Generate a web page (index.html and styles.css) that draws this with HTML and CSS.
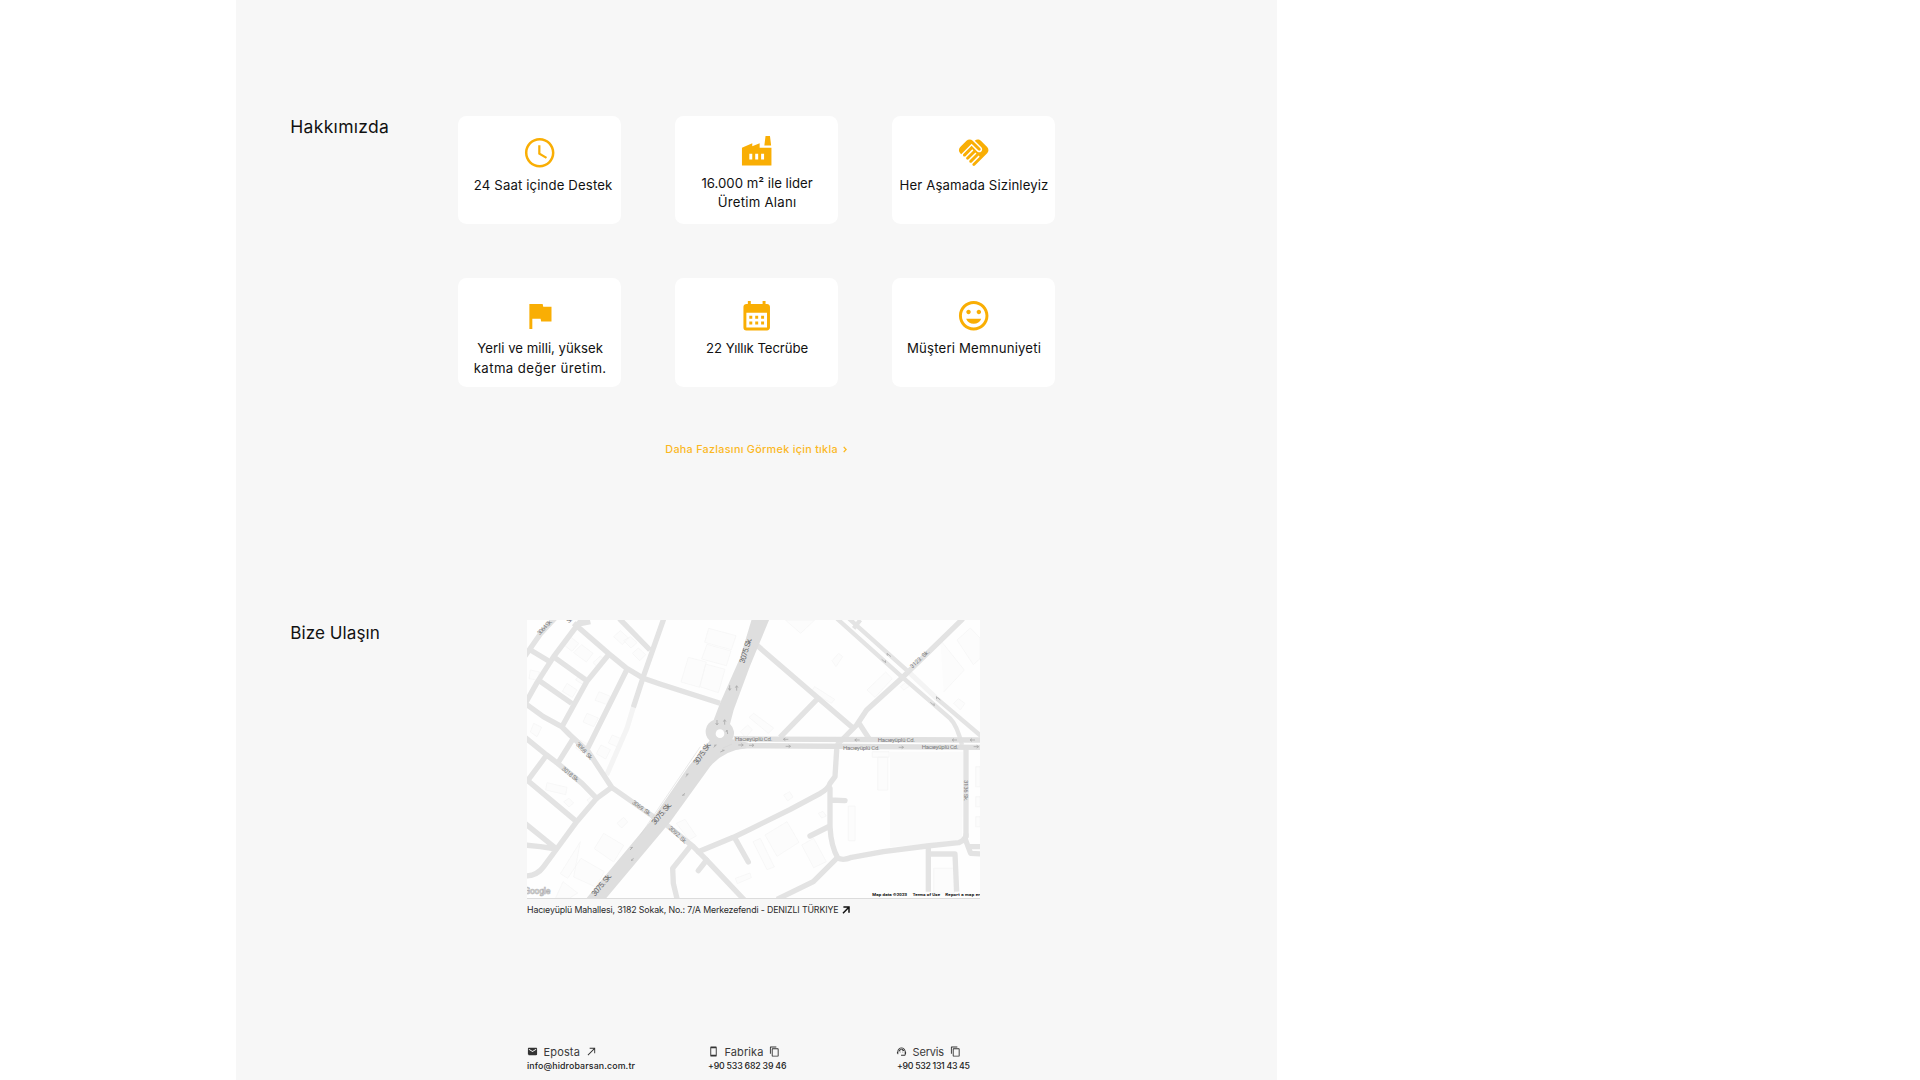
FILE: index.html
```html
<!DOCTYPE html>
<html lang="tr">
<head>
<meta charset="utf-8">
<title>Hidrobarsan</title>
<link rel="stylesheet" href="styles.css">
</head>
<body>
<main class="panel">
  <section class="about">
    <h2 class="title title-about">Hakkımızda</h2>
    <div class="cards">
      <article class="card">
        <svg class="icon" viewBox="0 0 24 24"><path d="M11.99 2C6.47 2 2 6.48 2 12s4.47 10 9.99 10C17.52 22 22 17.52 22 12S17.52 2 11.99 2zM12 20.300c-4.590 0-8.300-3.710-8.300-8.300s3.710-8.300 8.300-8.300 8.300 3.710 8.300 8.300-3.710 8.300-8.300 8.300zM12.500 7H11v6l5.250 3.150.75-1.230-4.500-2.670z"/></svg>
        <p class="label fit-a">24 Saat içinde Destek</p>
      </article>
      <article class="card card-raised">
        <svg class="icon" viewBox="0 0 24 24"><path d="M22 22H2V10l7-3v2l5-2v3h8v12zM17.200 8.500 18 2h3l.8 6.500h-4.600zM11 18h2v-4h-2v4zm-4 0h2v-4H7v4zm10-4h-2v4h2v-4z"/></svg>
        <p class="label">16.000 m² ile lider<br><span class="fit-b">Üretim Alanı</span></p>
      </article>
      <article class="card">
        <svg class="icon" viewBox="0 0 24 24"><path d="M16.480 10.410c-.39.39-1.040.39-1.430 0l-4.470-4.460-7.050 7.040-.66-.63c-1.170-1.170-1.170-3.070 0-4.240l4.240-4.240c1.170-1.170 3.070-1.170 4.240 0l5.130 5.120c.39.38.39 1.030 0 1.410zm.7-2.120c.78.78.78 2.050 0 2.830-1.270 1.270-2.610.22-2.830 0l-3.760-3.760-5.570 5.570c-.39.39-.39 1.020 0 1.410s1.020.39 1.420 0l4.620-4.620.71.71-4.620 4.620c-.39.39-.39 1.020 0 1.410s1.020.39 1.420 0l4.620-4.620.71.71-4.620 4.620c-.39.39-.39 1.020 0 1.410.39.39 1.020.39 1.410 0l4.620-4.620.71.71-4.620 4.620c-.39.39-.39 1.020 0 1.410s1.020.39 1.410 0l8.320-8.340c1.170-1.170 1.170-3.070 0-4.240l-4.240-4.240c-1.150-1.150-3.010-1.170-4.180-.06l4.470 4.470z"/></svg>
        <p class="label fit-f">Her Aşamada Sizinleyiz</p>
      </article>
      <article class="card card-low">
        <svg class="icon" viewBox="0 0 24 24"><path d="M14.400 6 14 4H5v17h2v-7h5.600l.4 2h7V6z"/></svg>
        <p class="label">Yerli ve milli, yüksek<br><span class="fit-c">katma değer üretim.</span></p>
      </article>
      <article class="card card-low">
        <svg class="icon" viewBox="0 0 24 24"><path d="M19 4h-1V2h-2v2H8V2H6v2H5c-1.110 0-1.990.9-1.990 2L3 20a2 2 0 0 0 2 2h14c1.100 0 2-.9 2-2V6c0-1.100-.9-2-2-2zm0 16H5V10h14v10zM9 14H7v-2h2v2zm4 0h-2v-2h2v2zm4 0h-2v-2h2v2zm-8 4H7v-2h2v2zm4 0h-2v-2h2v2zm4 0h-2v-2h2v2z"/></svg>
        <p class="label fit-d">22 Yıllık Tecrübe</p>
      </article>
      <article class="card card-low">
        <svg class="icon" viewBox="0 0 24 24"><path d="M11.990 2C6.470 2 2 6.480 2 12s4.470 10 9.990 10C17.520 22 22 17.520 22 12S17.520 2 11.990 2zM12 20c-4.420 0-8-3.580-8-8s3.580-8 8-8 8 3.580 8 8-3.580 8-8 8zm3.500-9c.83 0 1.500-.67 1.500-1.500S16.330 8 15.500 8 14 8.670 14 9.500s.67 1.500 1.500 1.500zm-7 0c.83 0 1.500-.67 1.500-1.500S9.330 8 8.500 8 7 8.670 7 9.500 7.670 11 8.500 11zm3.500 6.500c2.330 0 4.310-1.160 5.110-3.500H6.890c.8 2.340 2.780 3.500 5.110 3.500z"/></svg>
        <p class="label fit-e">Müşteri Memnuniyeti</p>
      </article>
    </div>
  </section>

  <a class="more"><span>Daha Fazlasını Görmek için tıkla</span><svg class="chevron" viewBox="0 0 4 7"><path d="M.7.9 3.100 3.500.7 6.100"/></svg></a>

  <section class="contact">
    <h2 class="title">Bize Ulaşın</h2>
    <div class="reach">
      <svg class="map" viewBox="0 0 1359 834">
        <g class="campus"><path d="M1089 395h220l-4 265-216 22z"/></g>
        <g class="buildings">
          <path d="M545 25l82 22-14 42-80-22zM540 73l72 20-14 44-74-20zM484 112l54 14-20 76-56-16zM536 132l58 16-20 70-56-18zM454 70"/>
          <path d="M105 70l22-22 28 22-20 24zM140 98l24-24 34 26-20 26zM198 128l22-20 14 12-20 24zM260 50l20-18 24 22-18 20zM316 100l18-16 22 20-18 18zM290 62l20-12 20 18-18 16zM120 190l30 20-14 22-30-18zM160 160l20 12-14 20-20-12zM216 215l34 14-12 24-34-12zM180 280l34 14-14 26-32-14zM256 345l28 12-12 24-28-12zM222 375l28 14-14 28-28-16zM160 360l22 12-16 26-20-14z"/>
          <path d="M10 150l28 6-8 24-24-4zM30 120M20 310l24 12-14 28-20-14zM60 488l60 14-4 22-60-14zM110 545l16-10 14 14-14 12zM180 540l20-16 12 12-18 20zM230 640l60 36-30 50-58-40zM270 610l20-18 12 14-18 18zM160 665l-60 96 22 14 40-60 70 40-26 46-66-30zM108 785l44 34-24 15h-42z"/>
          <path d="M448 610l26-12 34 50-22 12zM625 775l44-16 4 14-42 18zM640 335l22-20 14 14-20 24zM775 0l46 40 42-40zM915 122l20-22 12 10-20 30zM863 200l60 38-10 12-60-36zM1020 210l56-54 20 20-52 56zM680 280l60 44-16 16-58-48zM1120 200l18-14 10 12-18 12zM1290 60l40-36 29 30v62l-20 18zM1240 60l72 90-62 66M1280 250l14-14 20 14-14 20z"/>
          <path d="M1052 412h30v98h-30zM964 558h20v104h-20zM770 525l18-10 10 16-16 12zM874 580l14-6 10 14-14 6zM714 645l66-40 36 62-66 42zM678 665l22-10 42 86-22 8zM824 675l36-20 38 70-38 18zM1220 745h62v74h-62zM1346 440h13v60h-13zM1346 530h13v30h-13zM1346 590h13v30h-13zM1036 395h50v17h-50z"/>
        </g>
        <g class="alley"><path d="M319 262 300 325 239 465M1144 155 1229 235"/></g>
        <g class="streets">
          <path d="M-6 108 40 42 84-6M168-6 140 30 80 110 30 188-6 252M190 5 145 14"/>
          <path d="M140 10 244 100 299 145 349 175 399 192 579 250M277-4 369 90M411-6 349 170 319 262"/>
          <path d="M4 86 64 122M79 110 179 182M34 180 134 250M244 105 179 185 104 322"/>
          <path d="M-6 250 49 290 104 320 129 345 184 395 254 502 379 590 419 615 499 680 534 715 652 840"/>
          <path d="M299 150 182 385M-6 352 59 405 92 430 165 490 209 535 254 502M139 355 92 430M59 405 2 482 149 605M-6 476 10 488"/>
          <path d="M209 535 149 605 89 687 50 740Q30 768-6 768M-6 610 89 687M-6 675 40 680 89 687"/>
          <path class="round" d="M514 695 619 652 669 628 790 568 880 520Q905 505 909 490L924 470 929 390M624 655 664 726M539 720 514 752"/>
          <path d="M489 680 437 745 439 790 451 840M1317 380V650L1309 660"/>
          <path class="round" d="M909 505V620Q912 680 933 715Q950 722 974 712L1069 695 1200 678 1295 668Q1317 660 1317 645M909 540 954 542M909 618 849 648"/>
          <path d="M932 712 859 785 750 838M1204 675V815M1204 702H1284L1289 815M1314 655 1331 700 1362 702M1322 680H1362"/>
          <path d="M690 76 874 235 979 325M872 236 759 352M1308-4 1129 170 1019 270 989 315 930 375M995 308 1030 362"/>
        </g>
        <g class="lanes"><path d="M930-4 1124 170 1269 295Q1290 315 1305 375M966-4 1144 155M1229 235 1362 348M980 25 1000 0"/></g>
        <path class="avenue" d="M620 356 669 357 1359 360M590 384 669 377 1359 382"/>
        <path class="boulevard" d="M674-2H727L669 138 620 270 609 312A37 37 0 0 1 616 358L664 368 655 384Q590 392 549 440L430 605 238 834H179L374 600 484 440 548 362A37 37 0 0 1 560 300L579 250 640 112z"/>
        <circle class="island" cx="579" cy="341" r="13"/>
        <path class="divider" d="M520 380 340 645M588 384 615 372"/>
        <g class="arrows">
          <path d="M608 196v14m-4-5 4 6 4-6M629 212v-14m-4 5 4-6 4 6M570 300v14m-4-5 4 6 4-6M593 314v-14m-4 5 4-6 4 6M602 342l-2-12-3 6"/>
          <path d="M560 382l8-7-7 1M580 396l12-5-7-1M634 375h14m-5-4 6 4-6 4M666 376h14m-5-4 6 4-6 4M784 358h-14m5-4-6 4 6 4M776 379h14m-5-4 6 4-6 4M998 360h-14m5-4-6 4 6 4M1115 382h14m-5-4 6 4-6 4M1290 360h-14m5-4-6 4 6 4M1344 360h-14m5-4-6 4 6 4M1340 380h14m-5-4 6 4-6 4"/>
          <path d="M1092 110l-12-10 1 7M1064 118l12 10-1-7M1240 240l-12-10 1 7M1210 247l12 10-1-7M476 470l8-8-7 1M474 520l-8 6 7-1M309 690l8-8-7 1M320 715l-8 6 7-1"/>
        </g>
        <g class="names">
          <text textLength="78" transform="translate(652 131) rotate(-73)">3075. Sk.</text>
          <text textLength="76" transform="translate(511 436) rotate(-56)">3075. Sk.</text>
          <text textLength="80" transform="translate(384 616) rotate(-50)">3075. Sk.</text>
          <text textLength="80" transform="translate(204 830) rotate(-50)">3075. Sk.</text>
        </g>
        <g class="names small">
          <text textLength="56" transform="translate(38 46) rotate(-46)">3064 Sk.</text>
          <text textLength="14" transform="translate(126 10) rotate(-46)">Sk.</text>
          <text textLength="66" transform="translate(146 374) rotate(47)">3068. Sk.</text>
          <text textLength="62" transform="translate(103 448) rotate(40)">3018 Sk.</text>
          <text textLength="66" transform="translate(314 550) rotate(36)">3069. Sk.</text>
          <text textLength="68" transform="translate(424 626) rotate(43)">3092. Sk.</text>
          <text textLength="72" transform="translate(1156 146) rotate(-43)">3123. Sk.</text>
          <text textLength="64" transform="translate(1311 480) rotate(90)">3136 Sk.</text>
          <text x="624" y="362" textLength="112">Hacıeyüplü Cd.</text>
          <text x="1052" y="366" textLength="112">Hacıeyüplü Cd.</text>
          <text x="948" y="389" textLength="110">Hacıeyüplü Cd.</text>
          <text x="1184" y="388" textLength="110">Hacıeyüplü Cd.</text>
        </g>
        <text class="brand" x="-8" y="823" textLength="78">Google</text>
        <g class="credits">
          <text x="1036" y="828" textLength="104">Map data ©2023</text>
          <text x="1157" y="828" textLength="82">Terms of Use</text>
          <text x="1255" y="828" textLength="122">Report a map error</text>
        </g>
      </svg>
      <p class="address"><span>Hacıeyüplü Mahallesi, 3182 Sokak, No.: 7/A Merkezefendi - DENIZLI TÜRKIYE</span><svg class="go" viewBox="0 0 8 8"><path d="M1 7.200 6.600 1.500M1.400 1H7V6.800"/></svg></p>
      <div class="channels">
        <div class="channel">
          <div class="head">
            <svg class="mini" viewBox="0 0 24 24"><path d="M20 4H4c-1.100 0-1.990.9-1.990 2L2 18c0 1.100.9 2 2 2h16c1.100 0 2-.9 2-2V6c0-1.100-.9-2-2-2zm0 4-8 5-8-5V6l8 5 8-5v2z"/></svg>
            <span class="name eposta">Eposta</span>
            <svg class="mini out" viewBox="0 0 24 24"><path d="M8 4v2h8.600L3.500 19.100l1.400 1.400L18 7.400V16h2V4z"/></svg>
          </div>
          <p class="value mail">info@hidrobarsan.com.tr</p>
        </div>
        <div class="channel factory">
          <div class="head">
            <svg class="mini" viewBox="0 0 24 24"><path d="M17 1.010 7 1c-1.100 0-2 .9-2 2v18c0 1.100.9 2 2 2h10c1.100 0 2-.9 2-2V3c0-1.100-.9-1.990-2-1.990zM17 19H7V5h10v14z"/></svg>
            <span class="name fabrika">Fabrika</span>
            <svg class="mini" viewBox="0 0 24 24"><path d="M16 1H4c-1.100 0-2 .9-2 2v14h2V3h12V1zm3 4H8c-1.100 0-2 .9-2 2v14c0 1.100.9 2 2 2h11c1.100 0 2-.9 2-2V7c0-1.100-.9-2-2-2zm0 16H8V7h11v14z"/></svg>
          </div>
          <p class="value phone-a">+90 533 682 39 46</p>
        </div>
        <div class="channel">
          <div class="head">
            <svg class="mini" viewBox="0 0 24 24"><path d="M21 12.220C21 6.730 16.740 3 12 3c-4.690 0-9 3.650-9 9.280-.6.34-1 .98-1 1.720v2c0 1.100.9 2 2 2h1v-6.100c0-3.870 3.130-7 7-7s7 3.130 7 7V19h-8v2h8c1.100 0 2-.9 2-2v-1.220c.59-.31 1-.92 1-1.640v-2.300c0-.7-.41-1.310-1-1.620zM8 13a1 1 0 1 0 2 0 1 1 0 0 0-2 0zm6 0a1 1 0 1 0 2 0 1 1 0 0 0-2 0zM18 11.030C17.520 8.180 15.040 6 12.050 6c-3.030 0-6.290 2.510-6.030 6.450 2.470-1.010 4.330-3.210 4.860-5.890 1.310 2.630 4 4.440 7.120 4.470z"/></svg>
            <span class="name servis">Servis</span>
            <svg class="mini" viewBox="0 0 24 24"><path d="M16 1H4c-1.100 0-2 .9-2 2v14h2V3h12V1zm3 4H8c-1.100 0-2 .9-2 2v14c0 1.100.9 2 2 2h11c1.100 0 2-.9 2-2V7c0-1.100-.9-2-2-2zm0 16H8V7h11v14z"/></svg>
          </div>
          <p class="value phone-b">+90 532 131 43 45</p>
        </div>
      </div>
    </div>
  </section>
</main>
</body>
</html>
```
FILE: styles.css
```css
* { box-sizing: border-box; margin: 0; padding: 0; }
body { background: #fff; font-family: Inter, sans-serif; color: #111; overflow: hidden; }
.panel {
  width: 1041px;
  height: 1080px;
  margin-left: 236px;
  padding: 115.5px 0 0 54.300px;
  background: #f7f7f7;
  overflow: hidden;
}
svg { display: block; flex: none; }
.title { padding-top: 1px; font-size: 17.100px; line-height: 24px; font-weight: 400; color: #111; letter-spacing: .05px; }
.title-about { padding-top: 0; margin-top: -1px; font-size: 17.500px; letter-spacing: .31px; }

.about { display: grid; grid-template-columns: 168px auto; }
.cards {
  display: grid;
  grid-template-columns: repeat(3, 162.700px);
  grid-auto-rows: 108.500px;
  gap: 54.250px;
}
.card {
  display: flex;
  flex-direction: column;
  align-items: center;
  padding: 19.300px 0 0 1px;
  background: #fff;
  border-radius: 8.500px;
}
.card-raised { padding-top: 17.200px; }
.icon { width: 35.400px; height: 35.400px; fill: #f9ae04; }
.label {
  margin-top: 5.500px;
  font-size: 13.200px;
  line-height: 19.500px;
  text-align: center;
  white-space: nowrap;
}
.card-low .label { margin-top: 6.300px; }
.fit-a { letter-spacing: .13px; padding-left: 6px; }
.fit-b { letter-spacing: .25px; }
.fit-c { letter-spacing: .42px; }
.fit-d { letter-spacing: -.08px; }
.fit-e { letter-spacing: .18px; }
.fit-f { letter-spacing: .13px; }

.more {
  display: flex;
  align-items: center;
  gap: 5px;
  margin: 55.200px 0 0 375px;
  font-size: 10.800px;
  line-height: 16px;
  font-weight: 500;
  letter-spacing: .29px;
  color: #fbb81f;
}
.chevron { width: 4px; height: 7px; fill: none; stroke: #fbb81f; stroke-width: 1.300; }

.contact { display: grid; grid-template-columns: 236.700px 453px; margin-top: 162.300px; }
.map { width: 453px; height: 278px; background: #fefefe; }
.campus { fill: #fafafa; }
.buildings { fill: #fcfcfc; stroke: #f5f5f5; stroke-width: 2; }
.alley { fill: none; stroke: #f4f4f4; stroke-width: 15; }
.streets { fill: none; stroke: #e3e3e3; stroke-width: 16; stroke-linejoin: round; }
.round { stroke-linecap: round; }
.lanes { fill: none; stroke: #e4e4e4; stroke-width: 13; stroke-linejoin: round; }
.avenue { fill: none; stroke: #e0e0e0; stroke-width: 16; }
.boulevard { fill: #dedede; }
.island { fill: #fff; }
.divider { fill: none; stroke: #d4d4d4; stroke-width: 1.500; }
.arrows { fill: none; stroke: #aaa; stroke-width: 2.500; }
.names { font: 23px Roboto, sans-serif; fill: #686868; }
.small { font-size: 18px; fill: #7b7b7b; }
.brand { font: 500 26px Roboto, sans-serif; fill: #fafafa; stroke: #b4b4b4; stroke-width: 2; }
.credits { font: 500 13px Roboto, sans-serif; fill: #222; stroke: #222; stroke-width: .4; }

.address {
  display: flex;
  align-items: center;
  gap: 4px;
  padding-top: 4px;
  border-top: 1px solid #dcdcdc;
  font-size: 8.800px;
  line-height: 14px;
  letter-spacing: -.133px;
  white-space: nowrap;
  color: #2a2a2a;
}
.go { width: 8px; height: 8px; fill: none; stroke: #111; stroke-width: 1.500; }

.channels { display: flex; margin-top: 126.700px; }
.channel { flex: none; width: 181px; }
.factory { width: 188px; }
.head { display: flex; align-items: center; height: 15.500px; gap: 5.500px; }
.mini { width: 11px; height: 11px; fill: #333; }
.out { margin-left: 1px; }
.name { font-size: 11px; line-height: 16px; color: #3a3a3a; }
.eposta { letter-spacing: .15px; }
.fabrika { letter-spacing: .1px; }
.servis { letter-spacing: -.15px; }
.value { font-size: 8.800px; line-height: 13px; font-weight: 500; white-space: nowrap; color: #222; }
.mail { letter-spacing: .138px; }
.phone-a { letter-spacing: -.207px; }
.phone-b { letter-spacing: -.323px; padding-left: 1px; }
```
